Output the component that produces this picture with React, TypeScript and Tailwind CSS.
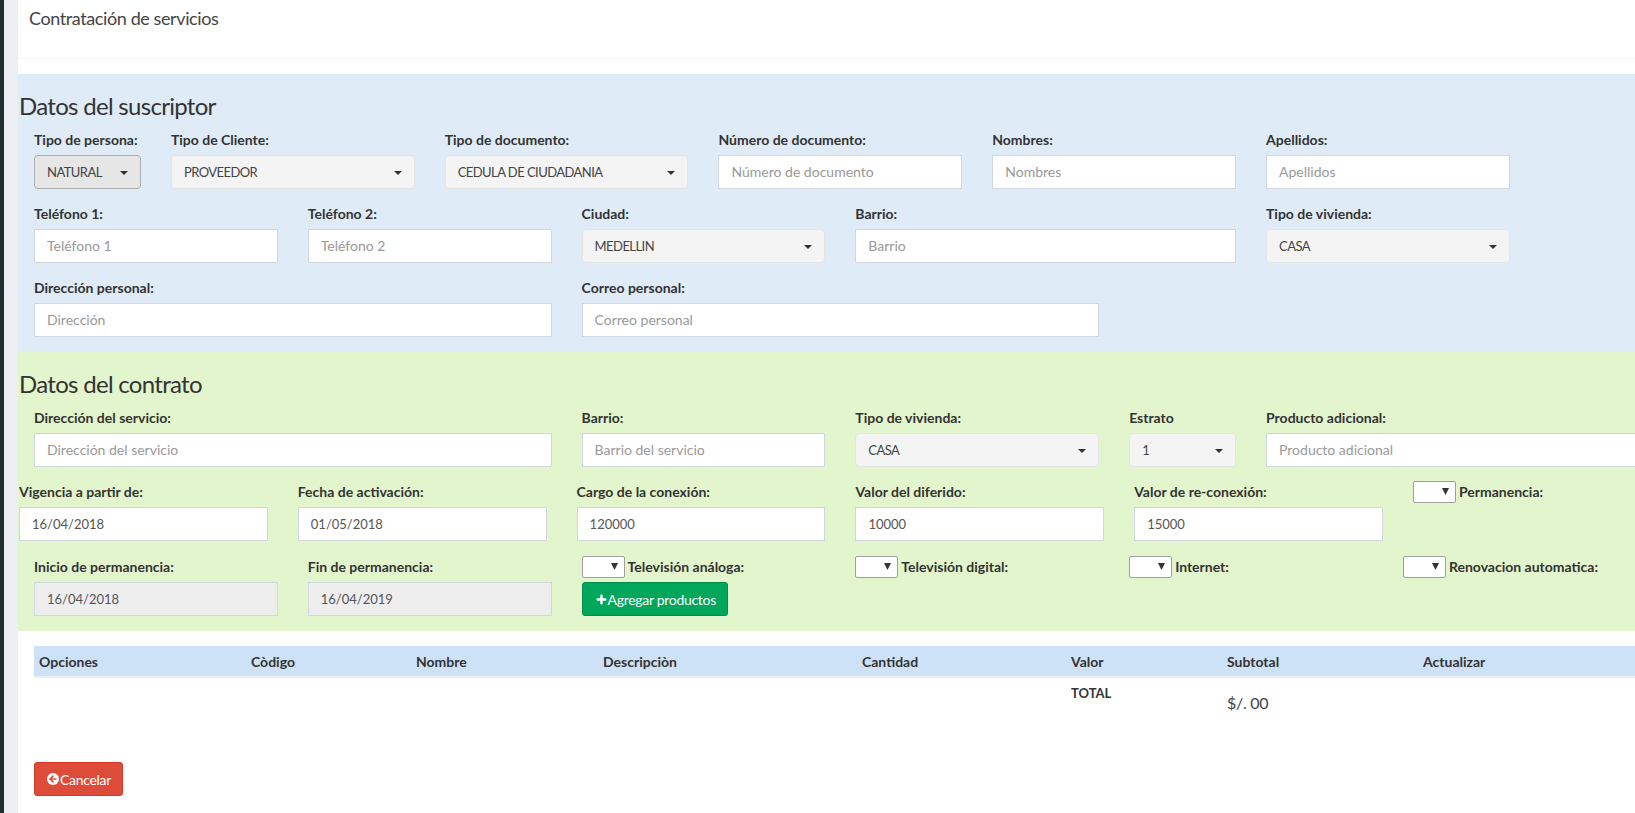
import { Plus, ArrowLeft } from 'lucide-react';

const inputClass =
  'w-full h-[34px] px-3 pb-px text-[14px] text-[#555] bg-white border border-[#d2d6de] outline-none placeholder:text-[#999]';

const valueClass = 'w-full h-[34px] px-3 pb-px text-[13px] text-[#555] bg-white border border-[#d2d6de] outline-none';

const disabledClass = 'w-full h-[34px] px-3 pb-px text-[13px] text-[#555] bg-[#eee] border border-[#d2d6de] outline-none';

const labelClass = 'block h-5 mb-[5px] text-[14px] leading-5 font-bold text-[#333] whitespace-nowrap';

const Field = ({ label, placeholder, className }: { label: string; placeholder: string; className: string }) => (
  <div className={className}>
    <label className={labelClass}>{label}</label>
    <input className={inputClass} placeholder={placeholder} />
  </div>
);

const ValueField = ({ label, value, disabled, className }: { label: string; value: string; disabled?: boolean; className: string }) => (
  <div className={className}>
    <label className={labelClass}>{label}</label>
    <input className={disabled ? disabledClass : valueClass} defaultValue={value} disabled={disabled} />
  </div>
);

const SelectField = ({ label, value, focused, className }: { label: string; value: string; focused?: boolean; className: string }) => (
  <div className={className}>
    <label className={labelClass}>{label}</label>
    <div
      className={
        focused
          ? 'flex items-center justify-between h-[34px] pl-3 pr-3 pt-px rounded-[4px] border border-[#adadad] bg-[#e6e6e6] text-[13px] tracking-[-0.55px] text-[#444]'
          : 'flex items-center justify-between h-[34px] pl-3 pr-3 pt-px rounded-[4px] border border-[#e5e5e5] bg-[#f4f4f4] text-[13px] tracking-[-0.55px] text-[#444]'
      }
    >
      <span>{value}</span>
      <span className="w-0 h-0 border-x-4 border-x-transparent border-t-4 border-t-[#333]" />
    </div>
  </div>
);

const CheckSelect = ({ label }: { label: string }) => (
  <div className="flex items-center gap-[3px] h-[22px] -mt-px whitespace-nowrap">
    <div className="relative w-[43px] h-[22px] shrink-0">
      <select className="block w-full h-full appearance-none bg-white border border-[#a0a0a0] rounded-[2px] text-[13px]" />
      <svg className="absolute right-[7px] top-[7px] pointer-events-none" width="7" height="7" viewBox="0 0 7 7">
        <path d="M0 0h7L3.5 7z" fill="#333" />
      </svg>
    </div>
    <span className="pb-[2px] text-[14px] font-bold text-[#333]">{label}</span>
  </div>
);

const columns = ['Opciones', 'Còdigo', 'Nombre', 'Descripciòn', 'Cantidad', 'Valor', 'Subtotal', 'Actualizar'];

export default function App() {
  return (
    <div className="flex h-[813px] w-[1635px] overflow-hidden bg-[#ecf0f5] font-['Lato','Noto_Sans',sans-serif] text-[#333]">
      <div className="w-1 shrink-0 bg-[#222d32]" />
      <div className="w-[14px] shrink-0" />
      <main className="flex-1 min-w-0 bg-white">
        <div className="h-[59px] pl-[11px] pt-2 border-b border-[#f4f4f4] mb-[15px]">
          <h1 className="text-[18px] leading-5 tracking-[-0.4px] text-[#444]">Contratación de servicios</h1>
        </div>

        <section className="h-[278px] bg-[#dfebf7] pt-5">
          <h3 className="h-[26px] mb-[10px] pl-px text-[24px] leading-[24px] tracking-[-0.7px] text-[#333]">Datos del suscriptor</h3>
          <div className="grid grid-cols-[repeat(12,136.9px)] gap-y-[15px] pl-[1px]">
            <SelectField className="col-span-1 px-[15px]" label="Tipo de persona:" value="NATURAL" focused />
            <SelectField className="col-span-2 px-[15px]" label="Tipo de Cliente:" value="PROVEEDOR" />
            <SelectField className="col-span-2 px-[15px]" label="Tipo de documento:" value="CEDULA DE CIUDADANIA" />
            <Field className="col-span-2 px-[15px]" label="Número de documento:" placeholder="Número de documento" />
            <Field className="col-span-2 px-[15px]" label="Nombres:" placeholder="Nombres" />
            <Field className="col-span-2 px-[15px]" label="Apellidos:" placeholder="Apellidos" />
            <div />

            <Field className="col-span-2 px-[15px]" label="Teléfono 1:" placeholder="Teléfono 1" />
            <Field className="col-span-2 px-[15px]" label="Teléfono 2:" placeholder="Teléfono 2" />
            <SelectField className="col-span-2 px-[15px]" label="Ciudad:" value="MEDELLIN" />
            <Field className="col-span-3 px-[15px]" label="Barrio:" placeholder="Barrio" />
            <SelectField className="col-span-2 px-[15px]" label="Tipo de vivienda:" value="CASA" />
            <div />

            <Field className="col-span-4 px-[15px]" label="Dirección personal:" placeholder="Dirección" />
            <Field className="col-span-4 px-[15px]" label="Correo personal:" placeholder="Correo personal" />
          </div>
        </section>

        <section className="h-[279px] bg-[#e3f5cd] pt-5">
          <h3 className="h-[26px] mb-[10px] pl-px text-[24px] leading-[24px] tracking-[-0.7px] text-[#333]">Datos del contrato</h3>
          <div className="grid grid-cols-[repeat(12,136.9px)] pl-[1px] mb-[15px]">
            <Field className="col-span-4 px-[15px]" label="Dirección del servicio:" placeholder="Dirección del servicio" />
            <Field className="col-span-2 px-[15px]" label="Barrio:" placeholder="Barrio del servicio" />
            <SelectField className="col-span-2 px-[15px]" label="Tipo de vivienda:" value="CASA" />
            <SelectField className="col-span-1 px-[15px]" label="Estrato" value="1" />
            <Field className="col-span-3 px-[15px]" label="Producto adicional:" placeholder="Producto adicional" />
          </div>

          <div className="grid grid-cols-[repeat(6,278.8px)] pl-px mb-[16px]">
            <ValueField className="pr-[30px]" label="Vigencia a partir de:" value="16/04/2018" />
            <ValueField className="pr-[30px]" label="Fecha de activación:" value="01/05/2018" />
            <ValueField className="pr-[30px]" label="Cargo de la conexión:" value="120000" />
            <ValueField className="pr-[30px]" label="Valor del diferido:" value="10000" />
            <ValueField className="pr-[30px]" label="Valor de re-conexión:" value="15000" />
            <div>
              <CheckSelect label="Permanencia:" />
            </div>
          </div>

          <div className="grid grid-cols-[repeat(12,136.9px)] pl-[1px]">
            <ValueField className="col-span-2 px-[15px]" label="Inicio de permanencia:" value="16/04/2018" disabled />
            <ValueField className="col-span-2 px-[15px]" label="Fin de permanencia:" value="16/04/2019" disabled />
            <div className="col-span-2 px-[15px]">
              <CheckSelect label="Televisión análoga:" />
              <button className="flex items-center h-[34px] mt-1 pl-3 pr-[11px] rounded-[3px] border border-[#008d4c] bg-[#00a65a] text-[14px] tracking-[-0.3px] text-white">
                <Plus size={13} strokeWidth={4.5} />
                Agregar productos
              </button>
            </div>
            <div className="col-span-2 px-[15px]">
              <CheckSelect label="Televisión digital:" />
            </div>
            <div className="col-span-2 px-[15px]">
              <CheckSelect label="Internet:" />
            </div>
            <div className="col-span-2 px-[15px]">
              <CheckSelect label="Renovacion automatica:" />
            </div>
          </div>
        </section>

        <div className="pl-4 pt-[15px]">
          <div className="grid grid-cols-[212px_165px_187px_259px_209px_156px_196px_1fr] h-8 items-center bg-[#cde2f6] border-b-2 border-[#ecf0f5] pl-[5px] text-[14px] font-bold text-[#333]">
            {columns.map((name) => (
              <span key={name}>{name}</span>
            ))}
          </div>
          <div className="grid grid-cols-[212px_165px_187px_259px_209px_156px_196px_1fr] h-[84px] pl-[5px]">
            <span className="col-start-6 mt-[5px] text-[13px] leading-5 font-bold">TOTAL</span>
            <span className="col-start-7 mt-[14px] text-[16px] leading-[22px] tracking-[-0.3px] text-[#444]">$/. 00</span>
          </div>
          <button className="flex items-center h-[34px] pl-3 pr-[11px] rounded-[3px] border border-[#d73925] bg-[#dd4b39] text-[14px] tracking-[-0.3px] text-white">
            <span className="flex items-center justify-center size-3 mr-px rounded-full bg-white text-[#dd4b39]">
              <ArrowLeft size={10} strokeWidth={4} />
            </span>
            Cancelar
          </button>
        </div>
      </main>
    </div>
  );
}
